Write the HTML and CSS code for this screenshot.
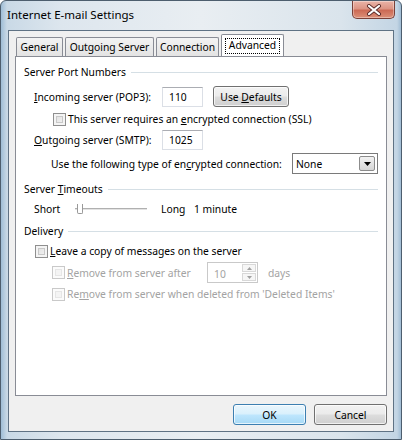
FILE: index.html
```html
<!DOCTYPE html>
<html>
<head>
<meta charset="utf-8">
<link rel="stylesheet" href="styles.css">
</head>
<body>
<div class="window">
  <div class="titlebar">
    <span class="title">Internet E-mail Settings</span>
    <div class="close">
      <svg width="16" height="12" viewBox="0 0 16 12"><path d="M3 2 L13 10 M13 2 L3 10" stroke="#5a2a28" stroke-width="4" stroke-linecap="round"/><path d="M3 2 L13 10 M13 2 L3 10" stroke="#fff" stroke-width="2.2" stroke-linecap="round"/></svg>
    </div>
  </div>
  <div class="client">
    <div class="tabs">
      <div class="tab t-gen">General</div>
      <div class="tab t-out">Outgoing Server</div>
      <div class="tab t-con">Connection</div>
      <div class="tab active"><span class="focus">Advanced</span></div>
    </div>
    <div class="panel">
      <div class="group h1"><span>Server Port Numbers</span><div class="rule"></div></div>
      <div class="row r-in">
        <span class="lbl"><u>I</u>ncoming server (POP3):</span>
        <div class="field f-port">110</div>
        <div class="btn defaults"><span>Use <u>D</u>efaults</span></div>
      </div>
      <div class="row r-ssl">
        <span class="cb"></span><span>This server requires an <u>e</u>ncrypted connection (SSL)</span>
      </div>
      <div class="row r-out">
        <span class="lbl"><u>O</u>utgoing server (SMTP):</span>
        <div class="field f-port">1025</div>
      </div>
      <div class="row r-enc">
        <span class="lbl-enc">Use the following type of en<u>c</u>rypted connection:</span>
        <div class="select"><span>None</span><span class="drop"><svg width="7" height="4" viewBox="0 0 7 4"><path d="M0 0 H7 L3.5 4 Z" fill="#000"/></svg></span></div>
      </div>
      <div class="group h2"><span>Server <u>T</u>imeouts</span><div class="rule"></div></div>
      <div class="row r-short">
        <span class="short">Short</span>
        <div class="slider"><span class="track"></span><span class="thumb"></span></div>
        <span class="long">Long</span>
        <span>1 minute</span>
      </div>
      <div class="group h3"><span>Delivery</span><div class="rule"></div></div>
      <div class="row r-leave">
        <span class="cb"></span><span><u>L</u>eave a copy of messages on the server</span>
      </div>
      <div class="row r-rem disabled">
        <span class="cb dis"></span><span class="rem-lbl"><u>R</u>emove from server after</span>
        <div class="spin"><span class="spin-val">10</span><span class="spin-btns"><span class="sb"><svg width="5" height="3" viewBox="0 0 5 3"><path d="M0 3 H5 L2.5 0 Z" fill="#a0a0a0"/></svg></span><span class="sb"><svg width="5" height="3" viewBox="0 0 5 3"><path d="M0 0 H5 L2.5 3 Z" fill="#a0a0a0"/></svg></span></span></div>
        <span class="days">days</span>
      </div>
      <div class="row r-del disabled">
        <span class="cb dis"></span><span>Re<u>m</u>ove from server when deleted from 'Deleted Items'</span>
      </div>
    </div>
    <div class="buttons">
      <div class="btn ok">OK</div>
      <div class="btn cancel">Cancel</div>
    </div>
  </div>
</div>
</body>
</html>
```
FILE: styles.css
```css
* { box-sizing: border-box; }
html, body { margin: 0; padding: 0; }
body {
  width: 402px; height: 440px; overflow: hidden;
  font-family: "Noto Sans", "Open Sans", sans-serif;
  font-size: 10.3px; color: #000;
}
.window {
  width: 402px; height: 440px;
  display: flex; flex-direction: column;
  background: linear-gradient(to right, #9fbdd6 0px, #c9d9e6 6px, #dde6ee 60px, #e9eef2 200px, #dae4ec 340px, #c3d5e4 396px, #8fb0cc 402px);
  border: 1px solid #4d5e6e;
  border-radius: 6px 6px 0 0;
}
.titlebar {
  height: 29px; flex: none;
  display: flex; align-items: flex-start; justify-content: space-between;
  padding-left: 6px;
}
.title { font-size: 11.5px; margin-top: 6px; color: #000; }
.close {
  width: 43px; height: 18px; margin-right: 6px;
  background: linear-gradient(#eab4a8 0%, #dc9484 45%, #cc6a55 55%, #dc9078 100%);
  border: 1px solid #7a4038; border-top: none;
  border-radius: 0 0 5px 5px;
  display: flex; align-items: center; justify-content: center;
  box-shadow: inset 0 0 0 1px rgba(255,255,255,0.35);
}
.client {
  flex: 1;
  margin: 0 7px 7px 7px;
  background: #f0f0f0;
  border: 1px solid #5f7284;
  padding: 0 6px;
  display: flex; flex-direction: column;
}
.tabs { display: flex; height: 25px; align-items: flex-end; padding-left: 1px; gap: 2px; }
.tab {
  height: 19px;
  border: 1px solid #898c95; border-bottom: none;
  background: linear-gradient(#f3f3f3, #e3e3e3);
  border-radius: 2px 2px 0 0;
  display: flex; align-items: center; justify-content: center;
  line-height: 1;
}
.t-gen { width: 47px; }
.t-out { width: 89px; }
.t-con { width: 63px; }
.tab.active {
  width: 63px;
  height: 23px; background: #fff; margin-bottom: -1px;
  align-items: flex-start; padding-top: 3px;
}
.focus { border: 1px dotted #000; padding: 1px 3px 3px 3px; }
.panel {
  height: 340px; flex: none;
  background: #fff;
  border: 1px solid #898c95;
  padding: 8px 8px 0 8px;
  display: flex; flex-direction: column;
}
.row { display: flex; align-items: center; flex: none; white-space: nowrap; }
.group { display: flex; align-items: center; height: 14px; flex: none; white-space: nowrap; }
.group .rule { flex: 1; height: 1px; background: #d5dfe5; margin-left: 5px; }
.h2 { margin-top: 8px; }
.h3 { margin-top: 8px; }
.lbl { width: 128px; }
.r-in { height: 21px; margin-top: 7px; padding-left: 10px; }
.r-ssl { height: 14px; margin-top: 5px; padding-left: 29px; }
.r-out { height: 20px; margin-top: 4px; padding-left: 10px; }
.r-enc { height: 21px; margin-top: 3px; padding-left: 27px; }
.lbl-enc { width: 241px; }
.r-short { height: 14px; margin-top: 6px; padding-left: 10px; }
.r-leave { height: 14px; margin-top: 6px; padding-left: 11px; }
.r-rem { height: 21px; margin-top: 4px; padding-left: 28px; }
.r-del { height: 14px; margin-top: 4px; padding-left: 28px; }
.field {
  height: 20px; width: 41px;
  border: 1px solid #dbdfe6; border-top-color: #abadb3;
  padding-left: 6px; display: flex; align-items: center;
}
.btn {
  border: 1px solid #707070; border-radius: 3px;
  background: linear-gradient(#f2f2f2 0%, #ebebeb 48%, #dddddd 52%, #cfcfcf 100%);
  display: flex; align-items: center; justify-content: center;
  box-shadow: inset 0 0 0 1px rgba(255,255,255,0.7);
}
.defaults { width: 76px; height: 21px; margin-left: 10px; }
.cb {
  width: 13px; height: 13px; flex: none;
  border: 1px solid #8f8f8f;
  background: linear-gradient(135deg, #dcdcdc, #f6f6f6);
  box-shadow: inset 0 0 0 2px #f4f4f4, inset 0 0 0 3px #c8c8c8;
  margin-right: 2px;
}
.cb.dis { border-color: #c9c9c9; box-shadow: inset 0 0 0 2px #fbfbfb, inset 0 0 0 3px #e6e6e6; background: #f4f4f4; }
.select {
  width: 86px; height: 21px;
  border: 1px solid #7a7a7a;
  display: flex; align-items: center; justify-content: space-between;
  padding-left: 3px; padding-right: 2px;
}
.drop {
  width: 16px; height: 15px;
  border: 1px solid #8c8c8c; border-radius: 2px;
  background: linear-gradient(#f2f2f2, #d6d6d6);
  display: flex; align-items: center; justify-content: center;
}
.short { width: 39px; }
.slider { width: 74px; height: 10px; position: relative; margin-right: 14px; }
.track { position: absolute; left: 2px; right: 0; top: 4px; height: 2px; background: #e3e3e3; border-top: 1px solid #b0b0b0; }
.thumb { position: absolute; left: 4px; top: 0; width: 6px; height: 10px; border: 1px solid #999; border-top: none; border-radius: 0 0 2px 2px; background: #fff; }
.long { width: 33px; }
.disabled { color: #a3a3a3; }
.rem-lbl { width: 140px; }
.spin {
  width: 51px; height: 21px;
  border: 1px solid #c9c9c9;
  display: flex; align-items: center; justify-content: space-between;
  padding-left: 6px; padding-right: 1px;
}
.spin-val { margin-top: 2px; }
.spin-btns { display: flex; flex-direction: column; gap: 1px; }
.sb { width: 14px; height: 8px; border: 1px solid #d8d8d8; display: flex; align-items: center; justify-content: center; background: #f6f6f6; }
.days { margin-left: 10px; }
.buttons { display: flex; justify-content: flex-end; gap: 8px; margin-top: 8px; padding-right: 0; }
.ok, .cancel { width: 73px; height: 21px; }
.ok {
  border-color: #3c7fb1;
  background: linear-gradient(#eaf6fd 0%, #d9f0fc 48%, #bee6fd 52%, #a7d9f5 100%);
}
```
